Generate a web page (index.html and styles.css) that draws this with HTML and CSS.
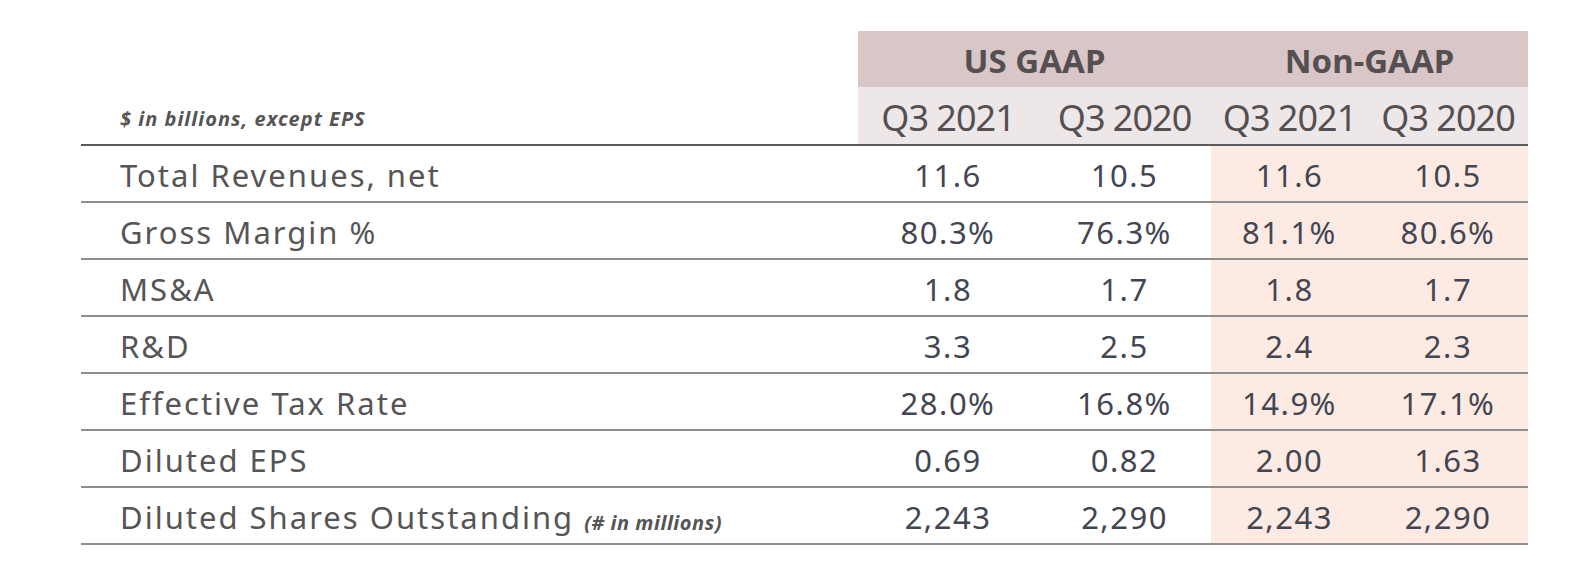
FILE: index.html
```html
<!DOCTYPE html>
<html>
<head>
<meta charset="utf-8">
<link rel="stylesheet" href="styles.css">
</head>
<body>
<div class="fin">
  <div class="row head-top">
    <div class="cell blank"></div>
    <div class="cell group span2">US GAAP</div>
    <div class="cell group span2">Non-GAAP</div>
  </div>
  <div class="row head-sub">
    <div class="cell note">$ in billions, except EPS</div>
    <div class="cell period">Q3 2021</div>
    <div class="cell period">Q3 2020</div>
    <div class="cell period">Q3 2021</div>
    <div class="cell period">Q3 2020</div>
  </div>
  <div class="row data">
    <div class="cell label">Total Revenues, net</div>
    <div class="cell num">11.6</div><div class="cell num">10.5</div>
    <div class="cell num ng">11.6</div><div class="cell num ng">10.5</div>
  </div>
  <div class="row data">
    <div class="cell label">Gross Margin %</div>
    <div class="cell num">80.3%</div><div class="cell num">76.3%</div>
    <div class="cell num ng">81.1%</div><div class="cell num ng">80.6%</div>
  </div>
  <div class="row data">
    <div class="cell label">MS&amp;A</div>
    <div class="cell num">1.8</div><div class="cell num">1.7</div>
    <div class="cell num ng">1.8</div><div class="cell num ng">1.7</div>
  </div>
  <div class="row data">
    <div class="cell label">R&amp;D</div>
    <div class="cell num">3.3</div><div class="cell num">2.5</div>
    <div class="cell num ng">2.4</div><div class="cell num ng">2.3</div>
  </div>
  <div class="row data">
    <div class="cell label">Effective Tax Rate</div>
    <div class="cell num">28.0%</div><div class="cell num">16.8%</div>
    <div class="cell num ng">14.9%</div><div class="cell num ng">17.1%</div>
  </div>
  <div class="row data">
    <div class="cell label">Diluted EPS</div>
    <div class="cell num">0.69</div><div class="cell num">0.82</div>
    <div class="cell num ng">2.00</div><div class="cell num ng">1.63</div>
  </div>
  <div class="row data">
    <div class="cell label">Diluted Shares Outstanding <span class="unit">(# in millions)</span></div>
    <div class="cell num">2,243</div><div class="cell num">2,290</div>
    <div class="cell num ng">2,243</div><div class="cell num ng">2,290</div>
  </div>
</div>
</body>
</html>
```
FILE: styles.css
```css
html, body {
  margin: 0;
  padding: 0;
  background: #ffffff;
}
body {
  font-family: "Noto Sans", "Open Sans", sans-serif;
  color: #545454;
}
.fin {
  margin: 31px 0 0 81px;
  width: 1447px;
}
.row {
  display: grid;
  grid-template-columns: 777px 180px 173px 157px 160px;
}
.cell {
  display: flex;
  align-items: center;
  justify-content: center;
  white-space: nowrap;
}
.span2 {
  grid-column: span 2;
}
.head-top {
  height: 56px;
}
.head-top .group {
  background: #d9c6c6;
  font-weight: 700;
  font-size: 33px;
  color: #545052;
  letter-spacing: 0;
  padding-top: 2px;
}
.head-sub {
  height: 57px;
  border-bottom: 2px solid #5a5a5a;
}
.head-sub .period {
  background: #eee7e7;
  font-size: 36px;
  color: #545052;
  letter-spacing: -1px;
  padding-top: 4px;
}
.note {
  justify-content: flex-start;
  padding-left: 39px;
  font-size: 20px;
  font-style: italic;
  font-weight: 700;
  letter-spacing: 1px;
  color: #555;
  padding-top: 6px;
}
.data {
  height: 55px;
  border-bottom: 2px solid #8e8e8e;
}
.label {
  justify-content: flex-start;
  padding-left: 39px;
  font-size: 31px;
  letter-spacing: 2px;
  color: #555;
  padding-top: 2px;
}
.unit {
  font-size: 20px;
  font-style: italic;
  font-weight: 700;
  letter-spacing: 0.5px;
  margin-left: 10px;
  padding-top: 12px;
}
.num {
  font-size: 31px;
  letter-spacing: 1.5px;
  color: #424652;
  padding-top: 2px;
}
.ng {
  background: #fdeae3;
}
```
